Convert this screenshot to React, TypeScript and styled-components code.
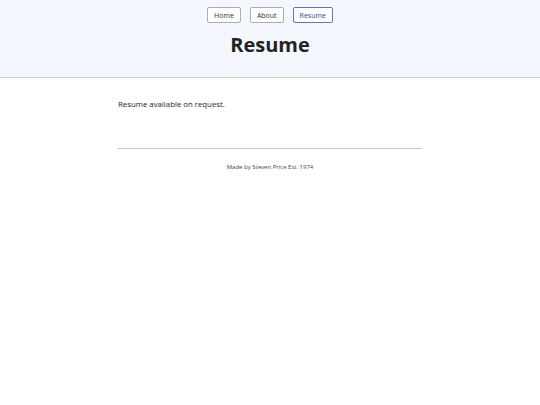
import React from "react";
import styled, { createGlobalStyle } from "styled-components";

const Global = createGlobalStyle`
  html, body { margin: 0; padding: 0; background: #ffffff; }
  body { font-family: "Open Sans", "Noto Sans", sans-serif; color: #222; }
`;

const Header = styled.header`
  background: #f4f7fe;
  border-bottom: 1px solid #c8ccd4;
  padding: 7px 0 0;
  height: 78px;
  box-sizing: border-box;
  display: flex;
  flex-direction: column;
  align-items: center;
`;

const Nav = styled.nav`
  display: flex;
  gap: 9px;
`;

const NavButton = styled.a<{ $active?: boolean }>`
  display: inline-flex;
  align-items: center;
  justify-content: center;
  height: 16px;
  padding: 0 6px;
  box-sizing: border-box;
  border: 1px solid ${(p) => (p.$active ? "#5a7ab8" : "#a8adb8")};
  border-radius: 2px;
  background: #ffffff;
  color: ${(p) => (p.$active ? "#2a4a8a" : "#333")};
  font-size: 7px;
  text-decoration: none;
`;

const Title = styled.h1`
  margin: 8px 0 0;
  font-size: 20px;
  font-weight: 700;
  color: #222;
  line-height: 28px;
`;

const Main = styled.main`
  width: 304px;
  margin: 0 auto;
  padding-top: 21px;
`;

const Text = styled.p`
  margin: 0;
  font-size: 7.8px;
  line-height: 11px;
  color: #222;
`;

const Rule = styled.hr`
  margin: 38px 0 0;
  border: none;
  border-top: 1px solid #c8c8c8;
`;

const Footer = styled.footer`
  text-align: center;
  font-size: 6px;
  line-height: 9px;
  color: #444;
  padding-top: 14px;
`;

export default function App() {
  return (
    <>
      <Global />
      <Header>
        <Nav>
          <NavButton href="#">Home</NavButton>
          <NavButton href="#">About</NavButton>
          <NavButton href="#" $active>Resume</NavButton>
        </Nav>
        <Title>Resume</Title>
      </Header>
      <Main>
        <Text>Resume available on request.</Text>
        <Rule />
        <Footer>Made by Steven Price Est. 1974</Footer>
      </Main>
    </>
  );
}
